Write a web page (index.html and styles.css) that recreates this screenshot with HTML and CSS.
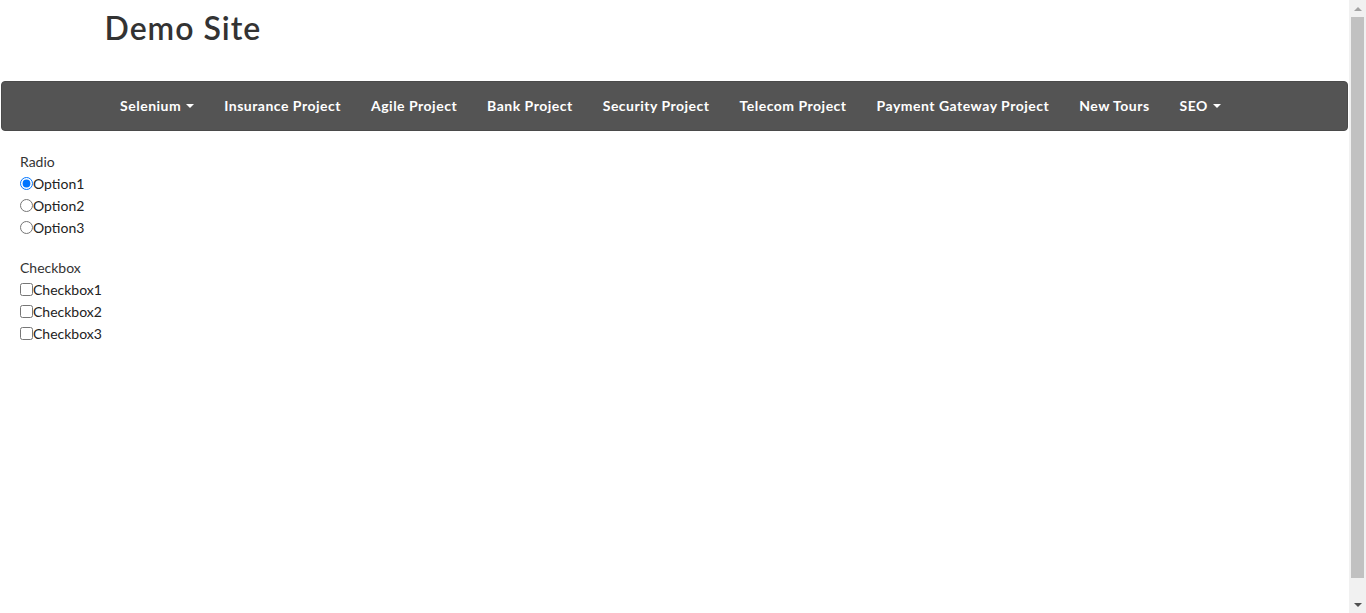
FILE: index.html
```html
<!DOCTYPE html>
<html lang="en">
<head>
<meta charset="utf-8">
<title>Demo Site</title>
<link rel="stylesheet" href="styles.css">
</head>
<body>
<div class="page">
  <header class="site-header">
    <div class="container">
      <h1 class="site-title">Demo Site</h1>
    </div>
  </header>
  <nav class="navbar">
    <ul class="nav">
      <li><a href="#">Selenium <span class="caret"></span></a></li>
      <li><a href="#">Insurance Project</a></li>
      <li><a href="#">Agile Project</a></li>
      <li><a href="#">Bank Project</a></li>
      <li><a href="#">Security Project</a></li>
      <li><a href="#">Telecom Project</a></li>
      <li><a href="#">Payment Gateway Project</a></li>
      <li><a href="#">New Tours</a></li>
      <li><a href="#">SEO <span class="caret"></span></a></li>
    </ul>
  </nav>
  <main class="content">
    <div class="group">
      <div class="group-title">Radio</div>
      <label class="opt"><input type="radio" name="r" checked>Option1</label>
      <label class="opt"><input type="radio" name="r">Option2</label>
      <label class="opt"><input type="radio" name="r">Option3</label>
    </div>
    <div class="group">
      <div class="group-title">Checkbox</div>
      <label class="opt"><input type="checkbox">Checkbox1</label>
      <label class="opt"><input type="checkbox">Checkbox2</label>
      <label class="opt"><input type="checkbox">Checkbox3</label>
    </div>
  </main>
</div>
<div class="scrollbar" aria-hidden="true">
  <div class="sb-btn"><span class="sb-up"></span></div>
  <div class="sb-track"><div class="sb-thumb"></div></div>
  <div class="sb-btn"><span class="sb-down"></span></div>
</div>
</body>
</html>
```
FILE: styles.css
```css
html, body {
  margin: 0;
  height: 100%;
  overflow: hidden;
}
body {
  font-family: Lato, "Noto Sans", sans-serif;
  font-size: 14px;
  color: #333;
  background: #fff;
}
.page {
  margin-right: 17px;
}
.container {
  width: 1170px;
  margin: 0 auto;
  padding: 0 15px;
  box-sizing: border-box;
}
.site-header {
  padding-top: 11px;
  height: 81px;
  box-sizing: border-box;
}
.site-title {
  margin: 0;
  font-size: 32px;
  line-height: 34px;
  font-weight: 600;
  letter-spacing: 1px;
  color: #333;
}
.navbar {
  margin: 0 1px 20px 1px;
  height: 50px;
  background: #545454;
  border: 1px solid #4a4a4a;
  border-radius: 4px;
  box-sizing: border-box;
}
.nav {
  list-style: none;
  margin: 0;
  padding: 0 8px 0 0;
  display: flex;
  justify-content: center;
  height: 100%;
}
.nav a {
  display: flex;
  align-items: center;
  height: 47px;
  padding: 0 15px;
  color: #fff;
  text-decoration: none;
  font-weight: 700;
  font-size: 14px;
  letter-spacing: 0.5px;
}
.caret {
  display: inline-block;
  width: 0;
  height: 0;
  margin-left: 5px;
  border-top: 4px solid #fff;
  border-left: 4px solid transparent;
  border-right: 4px solid transparent;
}
.content {
  padding: 0 20px;
}
.group {
  margin-bottom: 18px;
}
.group-title {
  line-height: 22px;
}
.opt {
  display: block;
  line-height: 22px;
  color: #222;
}
.opt input {
  margin: 0;
  width: 13px;
  height: 13px;
  vertical-align: -1px;
}
.scrollbar {
  position: fixed;
  top: 0;
  right: 0;
  bottom: 0;
  width: 17px;
  background: #f1f1f1;
  display: flex;
  flex-direction: column;
}
.sb-btn {
  height: 17px;
  display: flex;
  align-items: center;
  justify-content: center;
  flex: none;
}
.sb-up {
  width: 0;
  height: 0;
  border-bottom: 4px solid #a3a3a3;
  border-left: 4px solid transparent;
  border-right: 4px solid transparent;
}
.sb-down {
  width: 0;
  height: 0;
  border-top: 4px solid #505050;
  border-left: 4px solid transparent;
  border-right: 4px solid transparent;
}
.sb-track {
  flex: 1;
  padding: 0 2px 18px;
  display: flex;
}
.sb-thumb {
  flex: 1;
  background: #c1c1c1;
}
```
